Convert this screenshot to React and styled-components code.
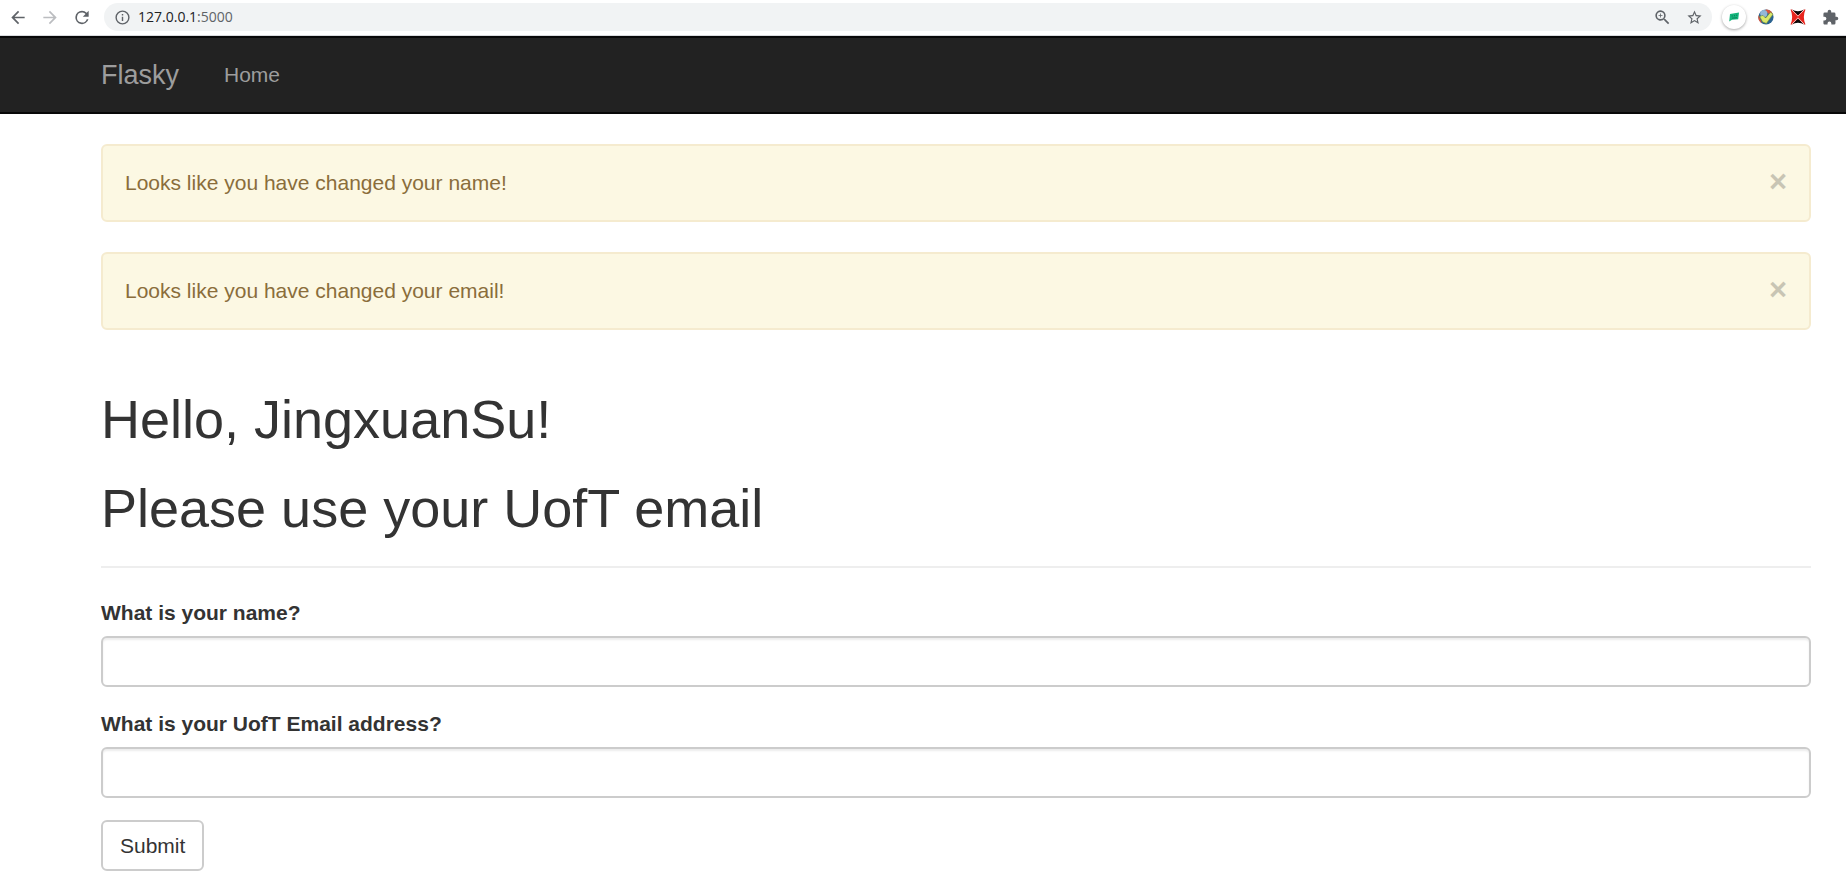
import React from "react";
import styled, { createGlobalStyle } from "styled-components";

const GlobalStyle = createGlobalStyle`
  *, *::before, *::after { box-sizing: border-box; }
  body {
    margin: 0;
    background: #fff;
    color: #333;
    font-family: "Liberation Sans", Arial, sans-serif;
    font-size: 21px;
    line-height: 30px;
  }
`;

const BrowserBar = styled.div`
  display: flex;
  align-items: center;
  height: 36px;
  padding: 0 6px 1px 8px;
  border-bottom: 1px solid #d9dbde;
  background: #fff;
`;

const BarButton = styled.button`
  display: flex;
  flex: none;
  align-items: center;
  justify-content: center;
  width: 20px;
  height: 20px;
  margin-right: ${(p) => p.$gap || 0}px;
  padding: 0;
  border: 0;
  border-radius: 50%;
  background: none;
  color: ${(p) => (p.$muted ? "#bbbdc0" : "#5f6368")};
`;

const RaisedButton = styled(BarButton)`
  width: 24px;
  height: 24px;
  background: #fff;
  box-shadow: 0 1px 3px rgba(0, 0, 0, 0.35);
`;

const AddressBar = styled.div`
  display: flex;
  flex: 1;
  align-items: center;
  height: 28px;
  margin-right: 10px;
  padding: 0 8px;
  border-radius: 14px;
  background: #f1f3f4;
`;

const Address = styled.span`
  flex: 1;
  margin-left: 6px;
  color: #5f6368;
  font-family: "Open Sans", "Noto Sans", sans-serif;
  font-size: 14px;
  line-height: 20px;
`;

const Host = styled.span`
  color: #202124;
`;

const Navbar = styled.nav`
  display: flex;
  align-items: center;
  min-height: 78px;
  padding: 0 35px 0 101px;
  border: solid #080808;
  border-width: 2px 0;
  background: #222;
`;

const NavLink = styled.a`
  margin-right: 45px;
  color: #9d9d9d;
  font-size: ${(p) => (p.$brand ? 27 : 21)}px;
  text-decoration: none;
`;

const Container = styled.main`
  padding: 30px 35px 19px 101px;
`;

const Alert = styled.div`
  display: flex;
  align-items: center;
  justify-content: space-between;
  margin-bottom: 30px;
  padding: 22px;
  border: 2px solid #f5ebcf;
  border-radius: 6px;
  background: #fcf8e3;
  color: #8a6d3b;
`;

const CloseButton = styled.button`
  display: flex;
  height: 30px;
  padding: 0;
  border: 0;
  background: none;
  color: #000;
  font: bold 31px/28px "Liberation Sans", Arial, sans-serif;
  opacity: 0.2;
`;

const PageHeader = styled.header`
  margin: 60px 0 30px;
  padding-bottom: 28px;
  border-bottom: 2px solid #eee;
`;

const Title = styled.h1`
  margin: 0;
  font-size: 54px;
  font-weight: 400;
  line-height: 59px;

  & + & {
    margin-top: 30px;
  }
`;

const Field = styled.div`
  margin-bottom: 22px;
`;

const Label = styled.label`
  display: block;
  margin-bottom: 8px;
  font-weight: 700;
`;

const Input = styled.input`
  display: block;
  width: 100%;
  height: 51px;
  padding: 9px 18px;
  border: 2px solid #ccc;
  border-radius: 6px;
  background: #fff;
  box-shadow: inset 0 2px 2px rgba(0, 0, 0, 0.075);
  color: #555;
  font: inherit;
`;

const SubmitButton = styled.button`
  display: block;
  height: 51px;
  padding: 0 17px;
  border: 2px solid #ccc;
  border-radius: 6px;
  background: #fff;
  color: #333;
  font: inherit;
`;

const Glyph = ({ size = 21, path }) => (
  <svg width={size} height={size} viewBox="0 0 24 24" fill="currentColor" aria-hidden="true">
    <path d={path} />
  </svg>
);

const icons = {
  back: "M20 11H7.83l5.59-5.59L12 4l-8 8 8 8 1.41-1.41L7.83 13H20v-2z",
  forward: "M12 4l-1.41 1.41L16.17 11H4v2h12.17l-5.58 5.59L12 20l8-8z",
  reload:
    "M17.65 6.35A7.96 7.96 0 0 0 12 4a8 8 0 1 0 7.73 10h-2.08A6 6 0 1 1 12 6c1.66 0 3.14.69 4.22 1.78L13 11h7V4l-2.35 2.35z",
  info: "M11 7h2v2h-2zm0 4h2v6h-2zm1-9a10 10 0 1 0 0 20 10 10 0 0 0 0-20zm0 18a8 8 0 1 1 0-16 8 8 0 0 1 0 16z",
  zoom: "M15.5 14h-.79l-.28-.27A6.5 6.5 0 1 0 13.73 14.43l.27.28v.79l5 4.99L20.49 19l-4.99-5zm-6 0a4.5 4.5 0 1 1 0-9 4.5 4.5 0 0 1 0 9zm.5-7H9v2H7v1h2v2h1v-2h2V9h-2z",
  star: "M22 9.24l-7.19-.62L12 2 9.19 8.63 2 9.24l5.46 4.73L5.82 21 12 17.27 18.18 21l-1.63-7.03L22 9.24zM12 15.4l-3.76 2.27 1-4.28-3.32-2.88 4.38-.38L12 6.1l1.71 4.04 4.38.38-3.32 2.88 1 4.28L12 15.4z",
  puzzle:
    "M20.5 11H19V7a2 2 0 0 0-2-2h-4V3.5a2.5 2.5 0 0 0-5 0V5H4a2 2 0 0 0-2 2v3.8h1.5a2.7 2.7 0 0 1 0 5.4H2V20c0 1.1.9 2 2 2h3.8v-1.5a2.7 2.7 0 0 1 5.4 0V22H17a2 2 0 0 0 2-2v-4h1.5a2.5 2.5 0 0 0 0-5z",
};

const ChatLogo = () => (
  <svg width="12" height="12" viewBox="0 0 12 12" aria-hidden="true">
    <path d="M2 3L11 1.6L10.2 8.2L4 8.8L1.2 10.6Z" fill="#14b57c" />
    <path d="M4.2 4.3v1.3M6.5 4v1.3M8.7 3.7V5M4 7.2l5-.5" stroke="#067a52" strokeWidth="0.8" />
  </svg>
);

const CheckLogo = () => (
  <svg width="18" height="18" viewBox="0 0 18 18" aria-hidden="true">
    <circle cx="9" cy="9" r="7.6" fill="#2b6390" />
    <path d="M9 1.4A7.6 7.6 0 0 1 15.6 5.4L12 6L8 3Z" fill="#d9553d" />
    <path d="M1.6 7L5 15.4A7.6 7.6 0 0 1 1.6 7Z" fill="#d9553d" />
    <circle cx="6.8" cy="5.6" r="3.6" fill="#94b7d6" />
    <path d="M2.6 8.4L6 7.4L8.6 10L13.6 4.2L16 6.2L9.4 15.4L5.6 14Z" fill="#dbe86a" stroke="#6f8a3a" strokeWidth="0.6" />
  </svg>
);

const CrossLogo = () => (
  <svg width="16" height="16" viewBox="0 0 16 16" aria-hidden="true">
    <path d="M1.5 .5Q8 4 14.5 .5L8 8ZM1.5 15.5Q8 12 14.5 15.5L8 8Z" fill="#0b0808" />
    <path
      d="M.5 .5L2 .5L8 6.2L14 .5L15.5 .5Q12.2 8 15.5 15.5L14 15.5L8 9.8L2 15.5L.5 15.5Q3.8 8 .5 .5Z"
      fill="#e8251d"
    />
    <path d="M1.8 .8L8 7.2L14.2 .8M1.8 15.2L8 8.8L14.2 15.2" fill="none" stroke="#fff" strokeWidth="0.7" />
  </svg>
);

const messages = ["Looks like you have changed your name!", "Looks like you have changed your email!"];

const fields = [
  { id: "name", type: "text", label: "What is your name?" },
  { id: "email", type: "email", label: "What is your UofT Email address?" },
];

export default function App() {
  return (
    <>
      <GlobalStyle />
      <BrowserBar>
        <BarButton $gap={12} aria-label="Back"><Glyph path={icons.back} /></BarButton>
        <BarButton $gap={12} $muted aria-label="Forward"><Glyph path={icons.forward} /></BarButton>
        <BarButton $gap={12} aria-label="Reload"><Glyph path={icons.reload} /></BarButton>
        <AddressBar>
          <BarButton aria-label="Site information"><Glyph size={17} path={icons.info} /></BarButton>
          <Address><Host>127.0.0.1</Host>:5000</Address>
          <BarButton $gap={12} aria-label="Zoom"><Glyph size={19} path={icons.zoom} /></BarButton>
          <BarButton aria-label="Bookmark"><Glyph size={17} path={icons.star} /></BarButton>
        </AddressBar>
        <RaisedButton $gap={10} aria-label="Chat extension"><ChatLogo /></RaisedButton>
        <BarButton $gap={12} aria-label="Checker extension"><CheckLogo /></BarButton>
        <BarButton $gap={12} aria-label="Cross extension"><CrossLogo /></BarButton>
        <BarButton aria-label="Extensions"><Glyph size={17} path={icons.puzzle} /></BarButton>
      </BrowserBar>
      <Navbar>
        <NavLink $brand href="/">Flasky</NavLink>
        <NavLink href="/">Home</NavLink>
      </Navbar>
      <Container>
        {messages.map((text) => (
          <Alert key={text} role="alert">
            {text}
            <CloseButton type="button" aria-label="Close">×</CloseButton>
          </Alert>
        ))}
        <PageHeader>
          <Title>Hello, JingxuanSu!</Title>
          <Title>Please use your UofT email</Title>
        </PageHeader>
        <form onSubmit={(event) => event.preventDefault()}>
          {fields.map(({ id, type, label }) => (
            <Field key={id}>
              <Label htmlFor={id}>{label}</Label>
              <Input id={id} name={id} type={type} />
            </Field>
          ))}
          <SubmitButton type="submit">Submit</SubmitButton>
        </form>
      </Container>
    </>
  );
}
